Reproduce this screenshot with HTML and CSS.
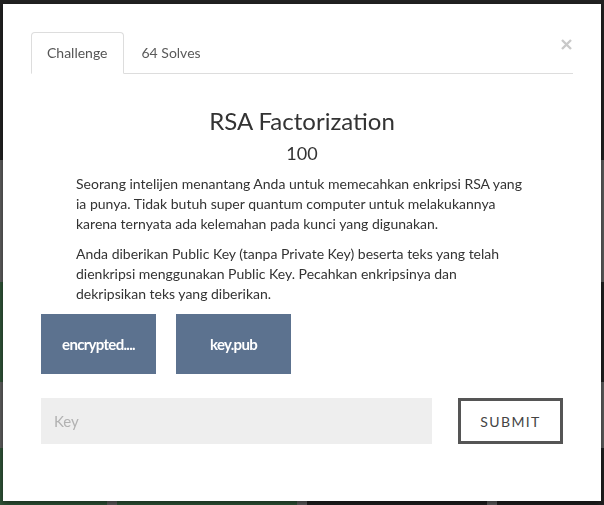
FILE: index.html
```html
<!DOCTYPE html>
<html lang="id">
<head>
<meta charset="utf-8">
<title>RSA Factorization</title>
<link rel="stylesheet" href="styles.css">
</head>
<body>
<div class="page">
  <header class="topbar"></header>
  <div class="cat-gap cat-gap-first"></div>
  <div class="tile-row">
    <div class="tile tile-solved"></div>
    <div class="tile"></div>
    <div class="tile"></div>
    <div class="tile"></div>
  </div>
  <div class="cat-gap cat-gap-second"></div>
  <div class="tile-row">
    <div class="tile tile-solved"></div>
    <div class="tile tile-solved"></div>
    <div class="tile"></div>
    <div class="tile"></div>
  </div>
</div>

<div class="backdrop">
  <div class="modal">
    <button class="close" aria-label="Close">
      <svg viewBox="0 0 11 11" width="11" height="11" aria-hidden="true">
        <path d="M1 1 L10 10 M10 1 L1 10" stroke="#c9c9c9" stroke-width="2.4" stroke-linecap="butt" fill="none"/>
      </svg>
    </button>
    <ul class="nav-tabs">
      <li class="tab active"><a href="#">Challenge</a></li>
      <li class="tab"><a href="#">64 Solves</a></li>
    </ul>
    <div class="tab-content">
      <h3 class="challenge-name">RSA Factorization</h3>
      <h4 class="challenge-value">100</h4>
      <div class="challenge-desc">
        <p>Seorang intelijen menantang Anda untuk memecahkan enkripsi RSA yang ia punya. Tidak butuh super quantum computer untuk melakukannya karena ternyata ada kelemahan pada kunci yang digunakan.</p>
        <p>Anda diberikan Public Key (tanpa Private Key) beserta teks yang telah dienkripsi menggunakan Public Key. Pecahkan enkripsinya dan dekripsikan teks yang diberikan.</p>
      </div>
      <div class="files">
        <a class="file-btn" href="#">encrypted....</a>
        <a class="file-btn" href="#">key.pub</a>
      </div>
      <form class="submit-row">
        <input class="key-input" type="text" placeholder="Key">
        <button class="submit-btn" type="button">SUBMIT</button>
      </form>
    </div>
  </div>
</div>
</body>
</html>
```

FILE: styles.css
```css
* { box-sizing: border-box; }

html, body {
  margin: 0;
  padding: 0;
  height: 100%;
  overflow: hidden;
}

body {
  background: #5e5e5e;
  font-family: "Lato", "Open Sans", sans-serif;
  font-size: 14px;
  line-height: 20px;
  color: #333;
}

.page {
  height: 100%;
  overflow: hidden;
}
.topbar {
  height: 160px;
  background: #222;
}
.cat-gap-first { height: 122px; }
.cat-gap-second { height: 66px; }

.tile-row {
  display: flex;
  gap: 10px;
  margin-left: -73px;
}
.tile {
  flex: 0 0 180px;
  height: 100px;
  background: #212121;
}
.tile-solved { background: #2f5437; }

/* modal overlay */
.backdrop {
  position: fixed;
  inset: 0;
  padding: 4px 3px;
}

.modal {
  position: relative;
  width: 598px;
  height: 497px;
  background: #fff;
  padding: 28px 28px 0;
  box-shadow: 0 2px 6px rgba(0, 0, 0, 0.5);
}

.close {
  position: absolute;
  top: 35px;
  right: 29px;
  width: 11px;
  height: 11px;
  padding: 0;
  border: 0;
  background: none;
  display: block;
  cursor: pointer;
}
.close svg { display: block; }

/* tabs */
.nav-tabs {
  display: flex;
  list-style: none;
  margin: 0;
  padding: 0;
  border-bottom: 1px solid #ddd;
}
.tab {
  margin-bottom: -1px;
  margin-right: 2px;
}
.tab a {
  display: block;
  padding: 10px 15px;
  line-height: 20px;
  font-size: 14px;
  color: #5a5a5a;
  text-decoration: none;
  border: 1px solid transparent;
  border-radius: 4px 4px 0 0;
}
.tab.active a {
  color: #555;
  background: #fff;
  border-color: #ddd #ddd transparent;
}

/* content */
.challenge-name {
  margin: 34px 0 10px;
  font-size: 24px;
  font-weight: 400;
  line-height: 1.1;
  text-align: center;
  color: #333;
}
.challenge-value {
  margin: 0 0 10px;
  font-size: 18px;
  font-weight: 400;
  line-height: 1.1;
  text-align: center;
  color: #333;
}
.challenge-desc {
  margin: 0 45px;
}
.challenge-desc p {
  margin: 0 0 10px;
}

.files {
  display: flex;
  gap: 20px;
  margin-left: 10px;
}
.file-btn {
  display: flex;
  align-items: center;
  justify-content: center;
  width: 115px;
  height: 60px;
  background: #5c728f;
  color: #fff;
  font-weight: 700;
  font-size: 15px;
  letter-spacing: -0.7px;
  text-decoration: none;
}

.submit-row {
  display: flex;
  gap: 26px;
  margin: 24px 10px 0;
}
.key-input {
  width: 391px;
  height: 46px;
  border: 0;
  background: #eee;
  padding: 0 13px;
  font-family: "Lato", sans-serif;
  font-size: 15px;
  color: #333;
  outline: none;
}
.key-input::placeholder { color: #b2b2b2; }

.submit-btn {
  width: 105px;
  height: 46px;
  border: 3px solid #555;
  background: #fff;
  font-family: "Lato", sans-serif;
  font-size: 14px;
  letter-spacing: 1.4px;
  color: #444;
  padding: 0;
}
```
